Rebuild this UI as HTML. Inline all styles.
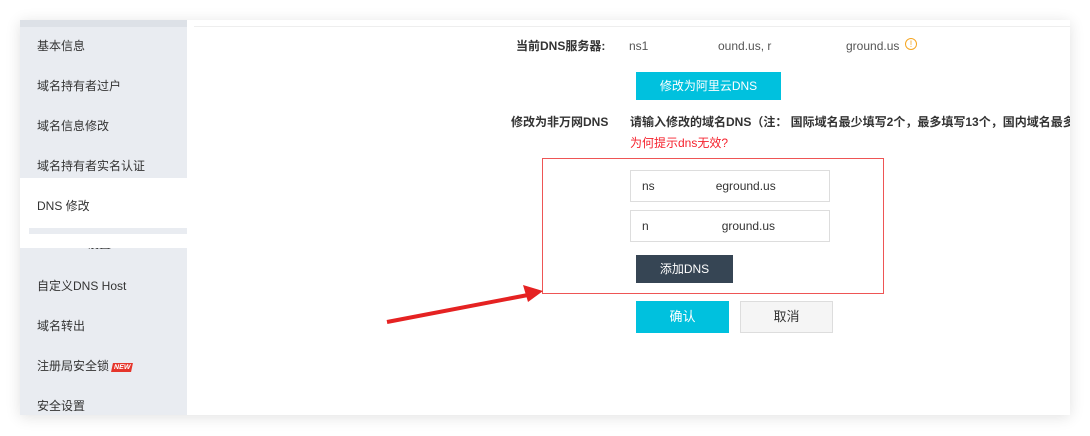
<!DOCTYPE html>
<html><head><meta charset="utf-8"><style>
*{margin:0;padding:0;box-sizing:border-box}
body{width:1090px;height:436px;background:#fff;position:relative;overflow:hidden;font-family:"Liberation Sans","Noto Sans CJK SC",sans-serif;font-size:12px;color:#333}
.win{position:absolute;left:20px;top:20px;width:1050px;height:395px;background:#fff;box-shadow:0 2px 14px rgba(0,0,0,.12)}
.side{position:absolute;left:20px;top:20px;width:167px;height:395px;background:#e9ecf1}
.strip{position:absolute;left:20px;top:20px;width:167px;height:7px;background:#dde1e7}
.it{position:absolute;left:37px;font-size:12px;color:#333;line-height:14px}
.act{position:absolute;left:20px;top:178px;width:167px;height:70px;background:#fff}
.bar{position:absolute;left:29px;top:228px;width:158px;height:6px;background:#e9ecf1}
.t{position:absolute;white-space:nowrap;line-height:14px}
.b{font-weight:bold}
.btn{position:absolute;color:#fff;text-align:center}
.inp{position:absolute;left:630px;width:200px;height:32px;border:1px solid #ddd;background:#fff;font-size:12px;line-height:30px;padding-left:11px;white-space:nowrap}
</style></head><body>
<div class="win"></div>
<div class="side"></div>
<div class="strip"></div>
<div class="it" style="top:39px">基本信息</div>
<div class="it" style="top:79px">域名持有者过户</div>
<div class="it" style="top:119px">域名信息修改</div>
<div class="it" style="top:159px">域名持有者实名认证</div>
<div class="it" style="top:243px;height:6px;overflow:hidden"><span style="position:relative;top:-6px">DNSSEC设置</span></div>
<div class="act"></div>
<div class="bar"></div>
<div class="it" style="top:199px">DNS 修改</div>
<div class="it" style="top:279px">自定义DNS Host</div>
<div class="it" style="top:319px">域名转出</div>
<div class="it" style="top:359px">注册局安全锁 <span style="display:inline-block;background:#e5352b;color:#fff;font-size:7px;font-weight:bold;line-height:9px;padding:0 2px;transform:skewX(-12deg);vertical-align:1px">NEW</span></div>
<div class="it" style="top:399px">安全设置</div>
<div style="position:absolute;left:194px;top:26px;width:876px;height:1px;background:#eee"></div>
<div class="t b" style="left:516px;top:39px">当前DNS服务器:</div>
<div class="t" style="left:629px;top:39px;color:#555">ns1</div>
<div class="t" style="left:718px;top:39px;color:#555">ound.us, r</div>
<div class="t" style="left:846px;top:39px;color:#555">ground.us</div>
<div style="position:absolute;left:905px;top:38px;width:12px;height:12px;border:1px solid #f5a623;border-radius:50%;color:#f5a623;font-size:9px;line-height:10px;text-align:center">!</div>
<div class="btn" style="left:636px;top:72px;width:145px;height:28px;background:#00c1de;line-height:28px">修改为阿里云DNS</div>
<div class="t b" style="left:511px;top:115px">修改为非万网DNS</div>
<div class="t b" style="left:630px;top:115px;width:440px;overflow:hidden">请输入修改的域名DNS（注： 国际域名最少填写2个，最多填写13个，国内域名最多</div>
<div class="t" style="left:630px;top:136px;color:#f5222d">为何提示dns无效?</div>
<div style="position:absolute;left:542px;top:158px;width:342px;height:136px;border:1px solid #e55"></div>
<div class="inp" style="top:170px">ns<span style="display:inline-block;width:61px"></span>eground.us</div>
<div class="inp" style="top:210px">n<span style="display:inline-block;width:73px"></span>ground.us</div>
<div class="btn" style="left:636px;top:255px;width:97px;height:28px;background:#364554;line-height:28px">添加DNS</div>
<div class="btn" style="left:636px;top:301px;width:93px;height:32px;background:#00c1de;line-height:32px;font-size:13px">确认</div>
<div class="btn" style="left:740px;top:301px;width:93px;height:32px;background:#f5f5f5;border:1px solid #ddd;color:#333;line-height:30px;font-size:13px">取消</div>
<svg style="position:absolute;left:0;top:0" width="1090" height="436"><line x1="387" y1="322" x2="528" y2="295" stroke="#e52222" stroke-width="4"/><polygon points="543,291 523,285 528,302" fill="#e52222"/></svg>
</body></html>
